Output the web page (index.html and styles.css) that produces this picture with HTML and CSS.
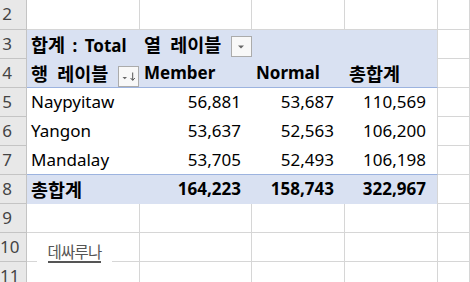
FILE: index.html
```html
<!DOCTYPE html>
<html lang="ko">
<head>
<meta charset="utf-8">
<title>피벗 테이블</title>
<link rel="stylesheet" href="styles.css">
</head>
<body>
<div class="sheet">
  <div class="rh">2</div><div class="c"></div><div class="c"></div><div class="c"></div><div class="c"></div><div class="c"></div>

  <div class="rh">3</div>
  <div class="pv b tight"><span class="ko">합계</span> : Total</div>
  <div class="pv b flex"><span class="ko">열 레이블</span><span class="dd dd3"><svg width="19" height="19" viewBox="0 0 19 19"><polygon points="6,8.5 12,8.5 9,11.5" fill="#666"/></svg></span></div>
  <div class="pv"></div>
  <div class="pv end"></div>
  <div class="c"></div>

  <div class="rh">4</div>
  <div class="pv b flex line"><span class="ko">행 레이블</span><span class="dd dd4"><svg width="19" height="19" viewBox="0 0 19 19"><polygon points="3.5,10 8,10 5.75,12.3" fill="#666"/><path d="M13.7 5.5V13.2M11.6 11L13.7 13.4L15.8 11" fill="none" stroke="#555" stroke-width="1"/></svg></span></div>
  <div class="pv b line">Member</div>
  <div class="pv b line">Normal</div>
  <div class="pv b line end"><span class="ko">총합계</span></div>
  <div class="c"></div>

  <div class="rh">5</div>
  <div class="pw">Naypyitaw</div>
  <div class="pw num">56,881</div>
  <div class="pw num">53,687</div>
  <div class="pw num end">110,569</div>
  <div class="c"></div>

  <div class="rh">6</div>
  <div class="pw">Yangon</div>
  <div class="pw num">53,637</div>
  <div class="pw num">52,563</div>
  <div class="pw num end">106,200</div>
  <div class="c"></div>

  <div class="rh">7</div>
  <div class="pw line">Mandalay</div>
  <div class="pw num line">53,705</div>
  <div class="pw num line">52,493</div>
  <div class="pw num line end">106,198</div>
  <div class="c"></div>

  <div class="rh">8</div>
  <div class="pv b"><span class="ko">총합계</span></div>
  <div class="pv b num">164,223</div>
  <div class="pv b num">158,743</div>
  <div class="pv b num end">322,967</div>
  <div class="c"></div>

  <div class="rh">9</div><div class="c"></div><div class="c"></div><div class="c"></div><div class="c"></div><div class="c"></div>
  <div class="rh">10</div><div class="c"></div><div class="c"></div><div class="c"></div><div class="c"></div><div class="c"></div>
  <div class="rh">11</div><div class="c"></div><div class="c"></div><div class="c"></div><div class="c"></div><div class="c"></div>

  <div class="wm"><span class="wm-text">데싸루나</span></div>
</div>
</body>
</html>
```
FILE: styles.css
```css
html, body {
  margin: 0;
  padding: 0;
  background: #ffffff;
  overflow: hidden;
}

.sheet {
  position: relative;
  display: grid;
  grid-template-columns: 27px 113px 112px 93px 93px 1fr;
  grid-template-rows: 30px repeat(9, 29px);
  width: 470px;
  height: 282px;
  font-family: "Noto Sans", "Noto Sans CJK KR", sans-serif;
  font-size: 17px;
  color: #000;
}

.sheet > div {
  box-sizing: border-box;
  line-height: 28px;
  white-space: nowrap;
  overflow: visible;
}

.rh {
  background: #e8e8e8;
  border-right: 1px solid #c4c4c4;
  border-bottom: 1px solid #c4c4c4;
  color: #444;
  text-align: right;
  padding-right: 14px;
}

.c {
  border-right: 1px solid #d6d6d6;
  border-bottom: 1px solid #d6d6d6;
}

.pv {
  background: #d9e1f2;
  padding: 0 4px;
  word-spacing: 4px;
}

.pv.tight {
  word-spacing: 3px;
}

.pw {
  background: #ffffff;
  padding: 0 4px;
}

.b {
  font-weight: 700;
}

.ko {
  font-family: "Noto Sans CJK KR", sans-serif;
  font-size: 18.5px;
  line-height: 28px;
}

.num {
  text-align: right;
  padding-right: 11px;
}

.end {
  border-right: 1px solid #d6d6d6;
}

.line {
  border-bottom: 1px solid #9cb3df;
}

.flex {
  display: flex;
  justify-content: space-between;
  padding-right: 0;
}

.dd {
  box-sizing: border-box;
  width: 21px;
  height: 21px;
  border: 1px solid #ababab;
  background: #f8f8f8;
  align-self: flex-end;
  display: block;
}

.dd svg {
  display: block;
}

.dd3 {
  margin-bottom: 2px;
  margin-right: 0;
}

.dd4 {
  margin-bottom: 0;
  margin-right: 1px;
}

.wm {
  position: absolute;
  left: 37px;
  top: 235px;
  width: 75px;
  height: 28px;
  background: #ffffff;
  display: flex;
  justify-content: center;
  align-items: flex-end;
}

.wm-text {
  font-family: "Noto Sans CJK KR", sans-serif;
  font-weight: 400;
  font-size: 15.5px;
  line-height: 18px;
  letter-spacing: -0.8px;
  color: #555;
  padding-bottom: 1px;
  border-bottom: 2px solid #555;
}
```
